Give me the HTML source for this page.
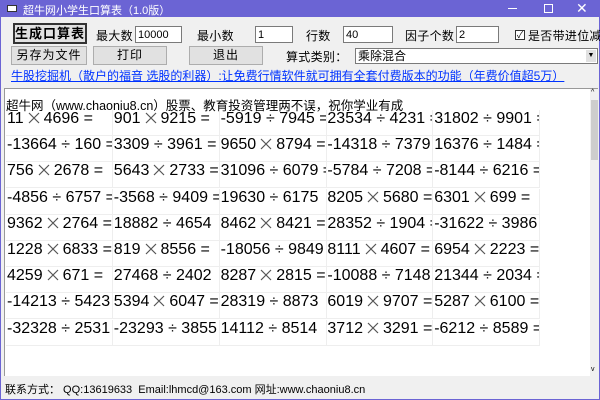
<!DOCTYPE html><html><head><meta charset="utf-8"><style>
*{margin:0;padding:0;box-sizing:border-box}
body{width:600px;height:400px;overflow:hidden;background:#f0f0f0;font-family:"Liberation Sans","Noto Sans CJK SC",sans-serif;position:relative}
.a{position:absolute;white-space:nowrap}
.t{font-size:12px;color:#000;letter-spacing:0.3px}
.btn{position:absolute;background:#e1e1e1;border:1px solid #adadad;font-size:12px;text-align:center;line-height:20px;letter-spacing:1px}
.in{position:absolute;background:#fff;border:1px solid #7a7a7a;font-size:11px;line-height:16px;padding-left:2px;height:17px}
.c{position:absolute;width:107px;height:26px;overflow:hidden;white-space:nowrap;font-size:16px;line-height:16px;padding-left:1px;border-right:1px solid #eee;border-bottom:1px solid #eee}
.x{display:inline-block;width:20px;height:12px;line-height:0;vertical-align:-1px;text-align:center}
.x svg{display:inline-block}
</style></head><body>
<div class="a" style="left:0;top:0;width:600px;height:17px;background:#6b64d4"></div>
<div class="a" style="left:7px;top:5px;width:10px;height:7px;background:#fff;border:1px solid #333"></div>
<div class="a" style="left:23px;top:2px;font-size:11px;color:#fff">超牛网小学生口算表（1.0版）</div>
<div class="a" style="left:508px;top:8px;width:9px;height:1px;background:#fff"></div>
<div class="a" style="left:544px;top:4px;width:9px;height:9px;border:1px solid #fff"></div>
<div class="a" style="left:576px;top:0px;color:#fff;font-size:14px">✕</div>
<div class="a" style="left:0;top:17px;width:1px;height:383px;background:#6b64d4"></div>
<div class="a" style="left:599px;top:17px;width:1px;height:383px;background:#6b64d4"></div>
<div class="a" style="left:0;top:399px;width:600px;height:1px;background:#6b64d4"></div>

<div class="btn" style="left:13px;top:23px;width:74px;height:21px;border:2px solid #333;font-weight:bold;font-size:13px;line-height:17px">生成口算表</div>
<div class="a t" style="left:96px;top:27px">最大数</div>
<div class="in" style="left:135px;top:26px;width:47px">10000</div>
<div class="a t" style="left:197px;top:27px">最小数</div>
<div class="in" style="left:255px;top:26px;width:38px">1</div>
<div class="a t" style="left:306px;top:27px">行数</div>
<div class="in" style="left:343px;top:26px;width:50px">40</div>
<div class="a t" style="left:405px;top:27px">因子个数</div>
<div class="in" style="left:456px;top:26px;width:43px">2</div>
<div class="a" style="left:515px;top:30px;width:10px;height:10px;border:1px solid #333;background:#fff;font-size:9px;line-height:8px;text-align:center">✓</div>
<div class="a t" style="left:528px;top:27px">是否带进位减</div>

<div class="btn" style="left:11px;top:46px;width:76px;height:19px;line-height:17px">另存为文件</div>
<div class="btn" style="left:93px;top:46px;width:74px;height:19px;line-height:17px">打印</div>
<div class="btn" style="left:189px;top:46px;width:74px;height:19px;line-height:17px">退出</div>
<div class="a t" style="left:286px;top:48px">算式类别：</div>
<div class="in" style="left:355px;top:48px;width:243px;height:16px;font-size:12px;line-height:14px">乘除混合</div>
<div class="a" style="left:586px;top:50px;width:10px;height:12px;background:#e1e1e1;font-size:7px;text-align:center;line-height:12px">▼</div>
<div class="a" style="left:11px;top:67px;font-size:12px;color:#0033ff;text-decoration:underline">牛股挖掘机（散户的福音 选股的利器）:让免费行情软件就可拥有全套付费版本的功能（年费价值超5万）</div>

<div class="a" style="left:4px;top:88px;width:594px;height:288px;background:#fff;border-top:1px solid #999;border-left:1px solid #999"></div>
<div class="a" style="left:590px;top:89px;width:8px;height:287px;background:#f0f0f0"></div>
<div class="a" style="left:591px;top:100px;width:7px;height:60px;background:#cdcdcd"></div>
<div class="a" style="left:591px;top:89px;font-size:7px">^</div>
<div class="a" style="left:591px;top:366px;font-size:7px">v</div>
<div class="a" style="left:6px;top:95px;font-size:12.5px">超牛网（www.chaoniu8.cn）股票、教育投资管理两不误，祝你学业有成</div>
<div id="g"></div>
<div class="a" style="left:5px;top:381px;font-size:11px">联系方式：&nbsp;QQ:13619633&nbsp;&nbsp;Email:lhmcd@163.com 网址:www.chaoniu8.cn</div>
<script>
var d=[["11 × 4696 =","901 × 9215 =","-5919 ÷ 7945 =","23534 ÷ 4231 =","31802 ÷ 9901 ="],
["-13664 ÷ 160 =","3309 ÷ 3961 =","9650 × 8794 =","-14318 ÷ 7379","16376 ÷ 1484 ="],
["756 × 2678 =","5643 × 2733 =","31096 ÷ 6079 =","-5784 ÷ 7208 =","-8144 ÷ 6216 ="],
["-4856 ÷ 6757 =","-3568 ÷ 9409 =","19630 ÷ 6175","8205 × 5680 =","6301 × 699 ="],
["9362 × 2764 =","18882 ÷ 4654","8462 × 8421 =","28352 ÷ 1904 =","-31622 ÷ 3986"],
["1228 × 6833 =","819 × 8556 =","-18056 ÷ 9849","8111 × 4607 =","6954 × 2223 ="],
["4259 × 671 =","27468 ÷ 2402","8287 × 2815 =","-10088 ÷ 7148","21344 ÷ 2034 ="],
["-14213 ÷ 5423","5394 × 6047 =","28319 ÷ 8873","6019 × 9707 =","5287 × 6100 ="],
["-32328 ÷ 2531","-23293 ÷ 3855","14112 ÷ 8514","3712 × 3291 =","-6212 ÷ 8589 ="]];
var X='<span class="x"><svg width="12" height="12" viewBox="0 0 12 12"><path d="M1 1L11 11M11 1L1 11" stroke="#555" stroke-width="1.2"/></svg></span>';
var h="";for(var r=0;r<9;r++)for(var c=0;c<5;c++){var s=d[r][c].replace(" × ",X);h+='<div class="c" style="left:'+(6+c*106.8)+'px;top:'+(110+r*26.2)+'px;padding-top:1px">'+s+'</div>';}
document.getElementById("g").innerHTML=h;
</script>
</body></html>
